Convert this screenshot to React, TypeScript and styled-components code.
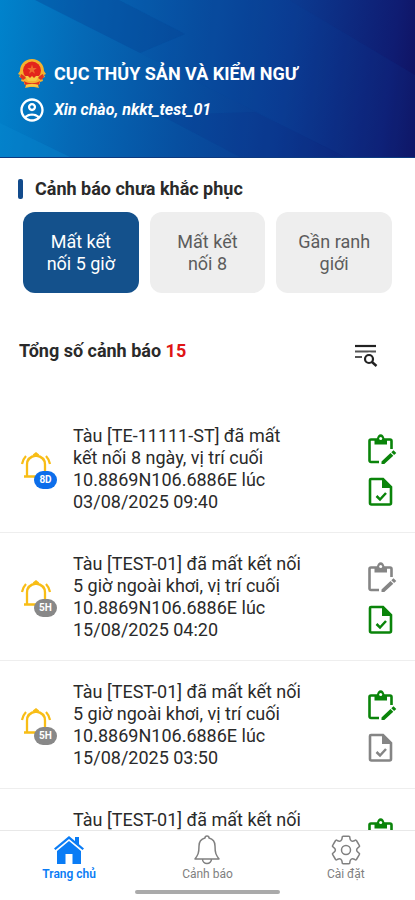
import React from "react";
import styled, { createGlobalStyle } from "styled-components";
import { MdOutlineAccountCircle } from "react-icons/md";

const GlobalStyle = createGlobalStyle`
  * { box-sizing: border-box; }
  body { margin: 0; background: #fff; font-family: Roboto, "Noto Sans", sans-serif; color: #2a2a2a; }
  button { font: inherit; color: inherit; border: 0; padding: 0; background: none; cursor: pointer; }
  h1, h2, p, ul { margin: 0; padding: 0; }
  ul { list-style: none; }
  svg { display: block; }
`;

const Screen = styled.div`
  height: 100vh;
  display: flex;
  flex-direction: column;
  overflow: hidden;
`;

const Header = styled.header`
  flex: none;
  display: grid;
  isolation: isolate;
  overflow: hidden;
  border-bottom: 1px solid #0c3a80;
  background: linear-gradient(97deg, #0083cc 0%, #0569b6 20%, #074fa0 45%, #0b3a90 68%, #0f1c72 92%, #10105f 100%);
`;

const HeaderArt = styled.svg`
  grid-area: 1 / 1;
  width: 100%;
  height: 100%;
  min-height: 0;
  contain: size;
`;

const HeaderContent = styled.div`
  grid-area: 1 / 1;
  z-index: 1;
  padding: 58px 18px 31px;
  display: flex;
  flex-direction: column;
  gap: 4px;
  color: #fff;
`;

const HeaderLine = styled.div`
  display: flex;
  align-items: center;
  height: 32px;
  gap: 8px;
`;

const IconSlot = styled.span`
  width: 28px;
  flex: none;
`;

const AppTitle = styled.h1`
  font-size: 18px;
  line-height: 24px;
  font-weight: 700;
`;

const Greeting = styled.p`
  font-size: 16px;
  line-height: 24px;
  font-style: italic;
  font-weight: 700;
`;

const SectionTitle = styled.h2`
  display: flex;
  align-items: center;
  gap: 12px;
  && { margin: 20px 18px 12px; }
  font-size: 18px;
  line-height: 22px;
  font-weight: 700;
`;

const Marker = styled.span`
  width: 5px;
  height: 20px;
  border-radius: 2px;
  background: #124b8c;
`;

const Filters = styled.div`
  flex: none;
  display: grid;
  grid-template-columns: repeat(3, 1fr);
  gap: 11px;
  padding: 0 23px;
`;

const FilterButton = styled.button<{ $active?: boolean }>`
  && {
    min-height: 81px;
    padding: 0 20px;
    border-radius: 12px;
    font-size: 18px;
    line-height: 22px;
    color: ${(p) => (p.$active ? "#fff" : "#5c5c5c")};
    background: ${(p) => (p.$active ? "#14518c" : "#eee")};
  }
`;

const Summary = styled.div`
  flex: none;
  display: flex;
  align-items: center;
  justify-content: space-between;
  margin: 42px 37px 38px 19px;
  height: 32px;
`;

const Total = styled.h2`
  font-size: 18px;
  line-height: 22px;
  font-weight: 700;
`;

const Count = styled.span`
  color: #e01515;
`;

const SearchButton = styled.button`
  && { padding-top: 8px; }
`;

const List = styled.ul`
  flex: 1;
  min-height: 0;
  overflow-y: auto;
  scrollbar-width: none;
`;

const Row = styled.li`
  display: flex;
  align-items: center;
  min-height: 128px;
  padding: 20px 18px 19px 20px;
  border-bottom: 1px solid #eee;
`;

const Alarm = styled.div`
  position: relative;
  flex: none;
  width: 53px;
  height: 34px;
`;

const Badge = styled.span<{ $tone: string }>`
  position: absolute;
  left: 14px;
  top: 19px;
  width: 23px;
  height: 18px;
  border-radius: 9px;
  background: ${(p) => p.$tone};
  color: #fff;
  font-size: 10px;
  line-height: 18px;
  font-weight: 700;
  text-align: center;
`;

const Message = styled.p`
  flex: 1;
  align-self: flex-start;
  && { padding-right: 60px; }
  font-size: 18px;
  line-height: 22px;
`;

const Actions = styled.div`
  flex: none;
  display: flex;
  flex-direction: column;
  padding-top: 4px;
`;

const ActionButton = styled.button<{ $enabled: boolean }>`
  && {
    height: 42px;
    color: ${(p) => (p.$enabled ? "#0a840a" : "#858585")};
  }
`;

const Nav = styled.nav`
  flex: none;
  border-top: 1px solid #e8e8e8;
  background: #fff;
`;

const Tabs = styled.div`
  display: grid;
  grid-template-columns: repeat(3, 1fr);
`;

const Tab = styled.a<{ $active?: boolean }>`
  display: flex;
  flex-direction: column;
  align-items: center;
  padding-top: 3px;
  height: 57px;
  text-decoration: none;
  font-size: 12px;
  line-height: 16px;
  font-weight: ${(p) => (p.$active ? 600 : 400)};
  color: ${(p) => (p.$active ? "#0a7cf5" : "#808080")};
`;

const HomeBar = styled.div`
  width: 35%;
  height: 4px;
  margin: 2px auto 6px;
  border-radius: 2px;
  background: #aaa;
`;

const Emblem = () => (
  <svg width="28" height="30" viewBox="0 0 28 30" aria-hidden="true">
    <path d="M14 0c7 0 12 5 12 12l2 3-2 1 1 2-3 1 1 3-3 1v2l-2 1 1 3-5-1H12l-5 1 1-3-2-1v-2l-3-1 1-3-3-1 1-2-2-1 2-3C2 5 7 0 14 0z" fill="#f5b22e" />
    <circle cx="14" cy="11.500" r="9" fill="#e3241b" />
    <path d="m14 5.500 1.200 3.500h3.600l-2.900 2.200 1.100 3.500-3-2.100-3 2.100 1.100-3.500L9.200 9h3.600z" fill="#f06a2c" />
    <path d="M3 15c2 1 4 2 5 4l-3 2-3-3zM25 15c-2 1-4 2-5 4l3 2 3-3z" fill="#df3420" />
    <path d="M7 17h3l2 2 2-2 2 2 2-2h3l-3 5h-8z" fill="#f8ca45" />
    <path d="M6 22c5 3 11 3 16 0l-1 4-4-1h-6l-4 1z" fill="#df3420" />
    <path d="m8 27 6-1 6 1" fill="none" stroke="#f8ca45" strokeWidth="2" />
  </svg>
);

const ListSearchIcon = () => (
  <svg width="24" height="24" viewBox="0 0 24 24" fill="none" stroke="#222" aria-hidden="true">
    <path d="M1 3h21" strokeWidth="2.200" />
    <path d="M1 8.500h21M1 14h7" stroke="#555" strokeWidth="2.200" />
    <circle cx="15.500" cy="15.500" r="6" fill="#fff" stroke="none" />
    <circle cx="15" cy="16" r="4" strokeWidth="2.200" />
    <path d="m18 19 4.500 4" strokeWidth="2.400" />
  </svg>
);

const BellIcon = () => (
  <svg width="34" height="30" viewBox="0 0 34 30" fill="none" stroke="#f8bd16" strokeWidth="2.300" aria-hidden="true">
    <path d="M4 24.500h24M7 24V12.500c0-5 3-8 9-9 6 1 9 4 9 9V24M13.500 3.500 16 1.500l2.500 2" />
    <path d="M6 4C4 6 3 8 2 12M26 4c2 2 3 4 4 8" />
  </svg>
);

const ClipboardEditIcon = () => (
  <svg width="30" height="32" viewBox="0 0 30 32" fill="none" stroke="currentColor" aria-hidden="true">
    <path d="M12 28H4a1.500 1.500 0 0 1-1.500-1.500V7A1.500 1.500 0 0 1 4 5.500h19A1.500 1.500 0 0 1 24.500 7v8" strokeWidth="2.600" />
    <path d="M7.500 5h2.300c.6-3 2-4.700 3.900-4.700S17 2 17.600 5h2.400v5.500H7.500z" fill="currentColor" stroke="none" />
    <circle cx="13.700" cy="4.500" r="1.500" fill="#fff" stroke="none" />
    <path d="m14.500 27.500 9-8.500 2.800 2.800-9 8.200h-2.800zM24.300 18.200l2.200-2 2.800 2.800-2.200 2z" fill="currentColor" stroke="none" />
  </svg>
);

const FileCheckIcon = () => (
  <svg width="30" height="30" viewBox="0 0 30 30" fill="none" stroke="currentColor" aria-hidden="true">
    <path d="M4 2h12l8 8v16a1.500 1.500 0 0 1-1.500 1.500h-18A1.500 1.500 0 0 1 3 26V3a1 1 0 0 1 1-1z" strokeWidth="2.600" />
    <path d="M15 1.500V11h9.500z" fill="currentColor" stroke="none" />
    <path d="m9.500 19 3.500 3.500 6-6.500" strokeWidth="2.500" />
  </svg>
);

const HomeIcon = () => (
  <svg width="32" height="32" viewBox="0 0 32 32" fill="currentColor" aria-hidden="true">
    <path d="M16 2 1 14.500 2.500 16 16 5l13.500 11 1.500-1.500-5-4.200V3h-4v4z" />
    <path d="M16 7 4 17v13h8.500V20h7v10H28V17z" />
  </svg>
);

const TabBellIcon = () => (
  <svg width="32" height="32" viewBox="0 0 32 32" fill="none" stroke="currentColor" strokeWidth="1.500" strokeLinejoin="round" aria-hidden="true">
    <path d="M14 4a2 2 0 1 1 4 0c4 1 6 4 6 8 0 7 1 9 4 13H4c3-4 4-6 4-13 0-4 2-7 6-8zM11.500 25a4.500 4.500 0 0 0 9 0" />
  </svg>
);

const polar = (radius: number, degrees: number) => {
  const angle = (degrees * Math.PI) / 180;
  return `${(16 + radius * Math.sin(angle)).toFixed(2)} ${(16 - radius * Math.cos(angle)).toFixed(2)}`;
};

const gearOutline =
  [0, 60, 120, 180, 240, 300]
    .map(
      (a) =>
        `${a ? "L" : "M"}${polar(13, a - 17)}Q${polar(14.6, a - 16)} ${polar(14, a - 10)}L${polar(14, a + 10)}Q${polar(14.6, a + 16)} ${polar(13, a + 17)}Q${polar(8.5, a + 30)} ${polar(13, a + 43)}`
    )
    .join("") + "Z";

const GearIcon = () => (
  <svg width="32" height="32" viewBox="0 0 32 32" fill="none" stroke="currentColor" strokeWidth="1.500" strokeLinejoin="round" aria-hidden="true">
    <path d={gearOutline} />
    <circle cx="16" cy="16" r="4.500" />
  </svg>
);

type Alert = { text: string; badge?: string; tone: string; edit: boolean; file: boolean };

const alerts: Alert[] = [
  { text: "Tàu [TE-11111-ST] đã mất kết nối 8 ngày, vị trí cuối 10.8869N106.6886E lúc 03/08/2025 09:40", badge: "8D", tone: "#0d6eea", edit: true, file: true },
  { text: "Tàu [TEST-01] đã mất kết nối 5 giờ ngoài khơi, vị trí cuối 10.8869N106.6886E lúc 15/08/2025 04:20", badge: "5H", tone: "#888", edit: false, file: true },
  { text: "Tàu [TEST-01] đã mất kết nối 5 giờ ngoài khơi, vị trí cuối 10.8869N106.6886E lúc 15/08/2025 03:50", badge: "5H", tone: "#888", edit: true, file: false },
  { text: "Tàu [TEST-01] đã mất kết nối", tone: "#888", edit: true, file: true },
];

export default function App() {
  return (
    <Screen>
      <GlobalStyle />
      <Header>
        <HeaderArt viewBox="0 0 415 157" preserveAspectRatio="none" aria-hidden="true">
          <path d="M35 0h84l66 34-45 19z" fill="#063f91" opacity=".35" />
          <path d="M119 0h170l126 75v82H345L140 53l45-19z" fill="#0648a5" opacity=".12" />
          <path d="M0 123 70 157H0z" fill="#0a8ad2" opacity=".35" />
          <path d="m160 115 80 42h105l-90-45z" fill="#082e86" opacity=".2" />
        </HeaderArt>
        <HeaderContent>
          <HeaderLine>
            <IconSlot><Emblem /></IconSlot>
            <AppTitle>CỤC THỦY SẢN VÀ KIỂM NGƯ</AppTitle>
          </HeaderLine>
          <HeaderLine>
            <IconSlot><MdOutlineAccountCircle size={28} /></IconSlot>
            <Greeting>Xin chào, nkkt_test_01</Greeting>
          </HeaderLine>
        </HeaderContent>
      </Header>
      <SectionTitle><Marker />Cảnh báo chưa khắc phục</SectionTitle>
      <Filters>
        <FilterButton $active aria-pressed="true">Mất kết nối 5 giờ</FilterButton>
        <FilterButton aria-pressed="false">Mất kết nối 8</FilterButton>
        <FilterButton aria-pressed="false">Gần ranh giới</FilterButton>
      </Filters>
      <Summary>
        <Total>Tổng số cảnh báo <Count>15</Count></Total>
        <SearchButton aria-label="Tìm kiếm"><ListSearchIcon /></SearchButton>
      </Summary>
      <List>
        {alerts.map((a, i) => (
          <Row key={i}>
            <Alarm><BellIcon />{a.badge && <Badge $tone={a.tone}>{a.badge}</Badge>}</Alarm>
            <Message>{a.text}</Message>
            <Actions>
              <ActionButton $enabled={a.edit} aria-label="Ghi chú"><ClipboardEditIcon /></ActionButton>
              <ActionButton $enabled={a.file} aria-label="Xác nhận"><FileCheckIcon /></ActionButton>
            </Actions>
          </Row>
        ))}
      </List>
      <Nav>
        <Tabs>
          <Tab href="#home" $active aria-current="page"><HomeIcon />Trang chủ</Tab>
          <Tab href="#alerts"><TabBellIcon />Cảnh báo</Tab>
          <Tab href="#settings"><GearIcon />Cài đặt</Tab>
        </Tabs>
        <HomeBar />
      </Nav>
    </Screen>
  );
}
